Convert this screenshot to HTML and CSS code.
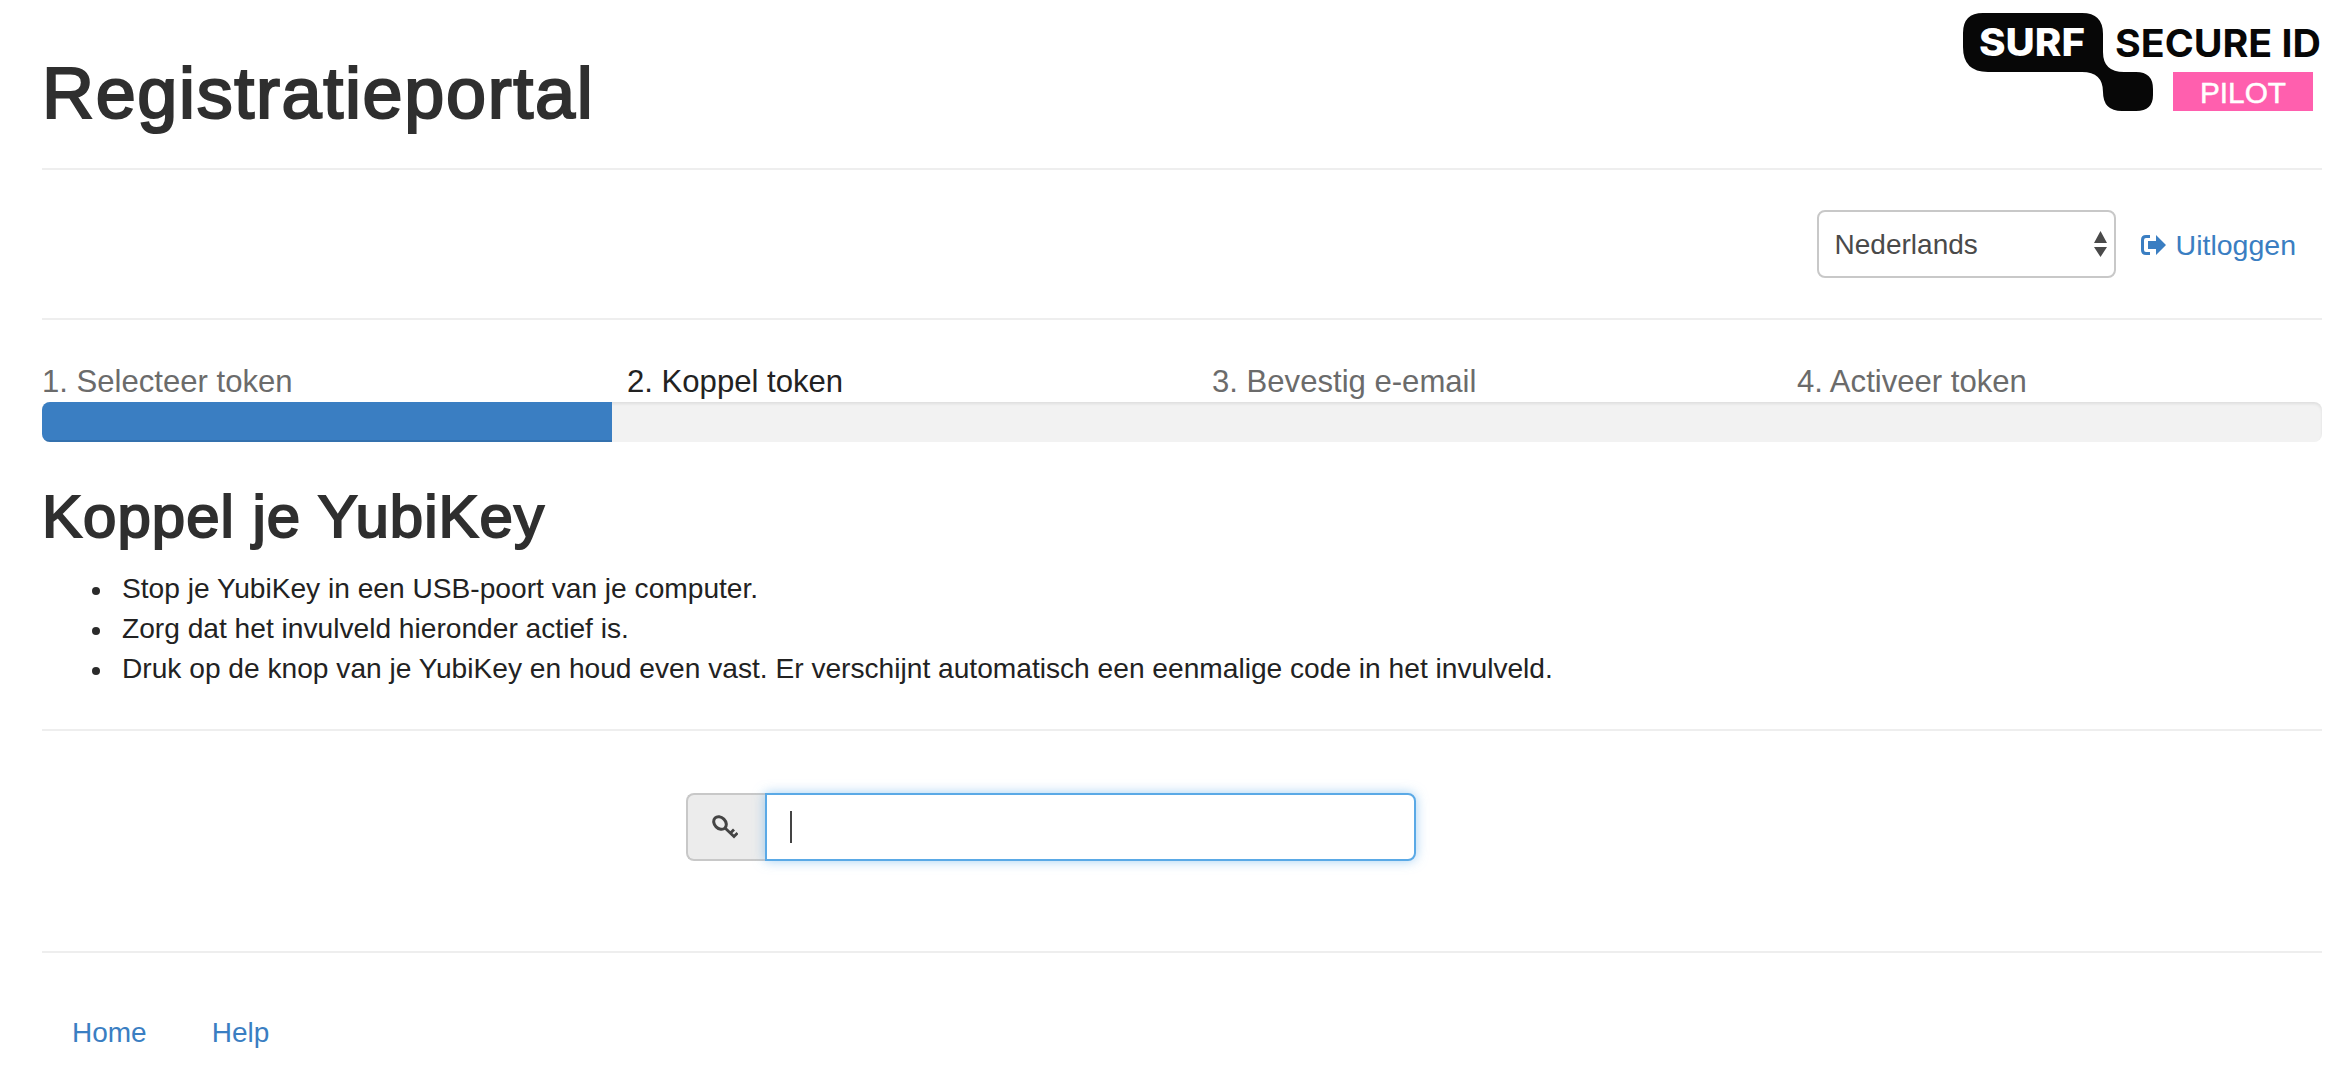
FILE: index.html
```html
<!DOCTYPE html>
<html lang="nl">
<head>
<meta charset="utf-8">
<title>Registratieportal</title>
<link rel="stylesheet" href="styles.css">
</head>
<body>
<div class="page">
  <header class="masthead">
    <h1 class="title">Registratieportal</h1>
    <svg class="logo" viewBox="60 10 364 104" width="364" height="104" role="img" aria-label="SURF Secure ID Pilot">
      <path d="M83 13H182Q203 13 203 34V52Q203 72 224 72H236Q253 72 253 89V95Q253 111 236 111H222Q203 111 203 92Q203 72 182 72H88Q63 72 63 47V33Q63 13 83 13Z" fill="#070707"/>
      <text class="logo-surf" x="79" y="56" textLength="106" lengthAdjust="spacingAndGlyphs">SURF</text>
      <text class="logo-secure" x="215" y="56.500" textLength="206" lengthAdjust="spacingAndGlyphs">SECURE ID</text>
      <rect x="273" y="72" width="140" height="39" fill="#ff5fae"/>
      <text class="logo-pilot" x="300" y="103" textLength="86" lengthAdjust="spacingAndGlyphs">PILOT</text>
    </svg>
  </header>

  <nav class="toolbar">
    <div class="select-wrap">
      <select class="lang">
        <option>Nederlands</option>
        <option>English</option>
      </select>
      <svg class="select-arrows" viewBox="0 0 13 26" width="13" height="26"><path d="M6.500 0L13 12H0Z M0 16H13L6.500 26Z" fill="#4a4a4a"/></svg>
    </div>
    <a class="logout" href="#">
      <svg class="logout-icon" viewBox="0 0 25 20" width="25" height="20"><path d="M9 1.500H5Q1.500 1.500 1.500 5V15Q1.500 18.500 5 18.500H9" fill="none" stroke="#3a7ec2" stroke-width="3"/><path d="M7 6H15V0L25 10L15 20V14H7Z" fill="#3a7ec2"/></svg>
      Uitloggen
    </a>
  </nav>

  <section class="progress-block">
    <ol class="steps">
      <li class="step">1. Selecteer token</li>
      <li class="step step-active">2. Koppel token</li>
      <li class="step">3. Bevestig e-email</li>
      <li class="step">4. Activeer token</li>
    </ol>
    <div class="progress"><div class="progress-bar"></div></div>
  </section>

  <main>
    <h2 class="heading">Koppel je YubiKey</h2>
    <ul class="instructions">
      <li>Stop je YubiKey in een USB-poort van je computer.</li>
      <li>Zorg dat het invulveld hieronder actief is.</li>
      <li>Druk op de knop van je YubiKey en houd even vast. Er verschijnt automatisch een eenmalige code in het invulveld.</li>
    </ul>
    <form class="otp-form">
      <div class="input-group">
        <span class="addon">
          <svg viewBox="0 0 26 24" width="26" height="24"><ellipse cx="8" cy="8" rx="7" ry="5.500" transform="rotate(45 8 8)" fill="none" stroke="#444" stroke-width="3"/><path d="M12.500 12.500L23 22.500M18.500 18L22 14.500M22 21.500L25.500 18" fill="none" stroke="#444" stroke-width="2.800"/></svg>
        </span>
        <div class="field">
          <input class="otp" type="text" aria-label="YubiKey code">
          <span class="caret"></span>
        </div>
      </div>
    </form>
  </main>

  <footer class="footer">
    <a href="#">Home</a>
    <a href="#">Help</a>
  </footer>
</div>
</body>
</html>
```
FILE: styles.css
```css
* { box-sizing: border-box; }
html, body { margin: 0; padding: 0; background: #fff; }
body {
  font-family: "Liberation Sans", Arial, sans-serif;
  font-size: 28px;
  line-height: 40px;
  color: #333;
  overflow: hidden;
}
a { color: #3a7ec2; text-decoration: none; }
.page { padding: 0 30px 0 42px; height: 1090px; }

.masthead {
  height: 170px;
  border-bottom: 2px solid #eee;
  display: flex;
  justify-content: space-between;
  align-items: flex-start;
}
.title {
  margin: 53px 0 0;
  font-size: 72px;
  line-height: 80px;
  font-weight: 400;
  letter-spacing: 1.650px;
  -webkit-text-stroke: 2.200px #2f2f2f;
  color: #2f2f2f;
}
.logo { display: block; margin: 10px -2px 0 0; }
.logo text { font-family: Inter, "Liberation Sans", sans-serif; }
.logo-surf { font-size: 38px; font-weight: 800; fill: #fff; }
.logo-secure { font-size: 38px; font-weight: 700; fill: #070707; }
.logo .logo-pilot { font-family: "Liberation Sans", sans-serif; font-size: 29px; font-weight: 400; fill: #fff; stroke: #fff; stroke-width: .5px; }

.toolbar {
  height: 150px;
  border-bottom: 2px solid #eee;
  display: flex;
  justify-content: flex-end;
  align-items: center;
  gap: 25px;
  padding: 0 26px 0 0;
}
.select-wrap { position: relative; width: 299px; height: 68px; }
.lang {
  appearance: none;
  width: 100%;
  height: 100%;
  padding: 2px 40px 0 16px;
  font: inherit;
  color: #4a4a4a;
  background: #fff;
  border: 2px solid #c8c8c8;
  border-radius: 8px;
}
.select-arrows { position: absolute; right: 9px; top: 21px; }
.logout { display: flex; align-items: center; gap: 10px; padding-top: 1px; font-size: 28.500px; }
.logout-icon { display: block; }

.steps {
  list-style: none;
  margin: 0;
  padding: 0;
  display: flex;
  height: 82px;
  align-items: flex-end;
  font-size: 31.100px;
}
.step { flex: 0 0 585px; color: #6b6b6b; line-height: 40px; white-space: nowrap; }
.step-active { color: #222; }
.progress {
  height: 40px;
  background: #f2f2f2;
  border-radius: 8px;
  overflow: hidden;
  box-shadow: inset 0 2px 3px rgba(0, 0, 0, .08);
}
.progress-bar {
  width: 25%;
  height: 100%;
  background: #3a7ec2;
  box-shadow: inset 0 -2px 0 rgba(0, 0, 0, .1);
}

.heading {
  margin: 42px 0 0;
  font-size: 60px;
  line-height: 66px;
  font-weight: 400;
  letter-spacing: 1px;
  -webkit-text-stroke: 2px #2f2f2f;
  color: #2f2f2f;
}
.instructions {
  list-style: none;
  margin: 19px 0 0;
  padding: 0 0 40px 80px;
  border-bottom: 2px solid #eee;
  color: #222;
  font-size: 28.150px;
  line-height: 40px;
}
.instructions li { position: relative; }
.instructions li::before {
  content: "";
  position: absolute;
  left: -30px;
  top: 18px;
  width: 8px;
  height: 8px;
  border-radius: 50%;
  background: #2a2a2a;
}
.otp-form {
  height: 222px;
  border-bottom: 2px solid #eee;
  padding: 62px 0 0 644px;
}
.input-group { display: flex; width: 730px; height: 68px; }
.addon {
  flex: 0 0 79px;
  display: flex;
  align-items: center;
  justify-content: center;
  padding-right: 4px;
  background: #ececec;
  border: 2px solid #c8c8c8;
  border-right: 0;
  border-radius: 8px 0 0 8px;
}
.addon svg { display: block; }
.field { position: relative; flex: 1; }
.otp {
  display: block;
  width: 100%;
  height: 100%;
  padding: 0 24px;
  font: inherit;
  color: #555;
  background: #fff;
  border: 2px solid #5aa9e6;
  border-radius: 0 8px 8px 0;
  outline: 0;
  caret-color: transparent;
  box-shadow: 0 0 12px rgba(102, 175, 233, .6);
}
.caret {
  position: absolute;
  left: 25px;
  top: 18px;
  width: 2px;
  height: 32px;
  background: #444;
}
.footer {
  display: flex;
  gap: 65px;
  padding: 60px 0 0 30px;
}
```
